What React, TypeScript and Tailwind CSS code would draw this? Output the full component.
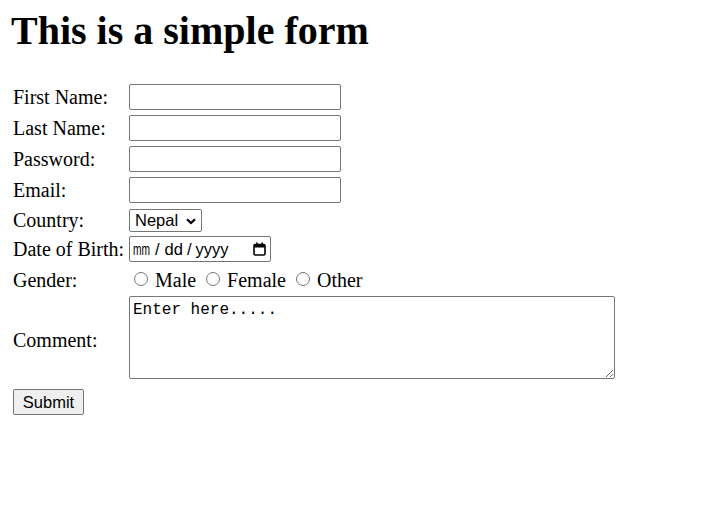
import React from 'react';

const serif = { fontFamily: '"Liberation Serif", "Times New Roman", serif' };
const sans = { fontFamily: '"Liberation Sans", Arial, sans-serif' };

function Row({
    label,
    children,
    className = '',
    labelClassName = '',
}: {
    label: string;
    children: React.ReactNode;
    className?: string;
    labelClassName?: string;
}) {
    return (
        <div className={`flex items-center ${className}`}>
            <div className={`w-[116px] shrink-0 text-[20px] leading-[23px] ${labelClassName}`}>{label}</div>
            <div className="flex items-center">{children}</div>
        </div>
    );
}

function TextBox({ type = 'text' }: { type?: string }) {
    return (
        <input
            type={type}
            className="w-[212px] h-[26px] border border-[#767676] rounded-[2px] bg-white px-1 outline-none"
        />
    );
}

function Radio({ label }: { label: string }) {
    return (
        <label className="flex items-center mr-[5px]">
            <span className="ml-[5px] mr-[7px] mt-[-3px] shrink-0 w-[14px] h-[14px] rounded-full border border-[#767676] bg-white" />
            <span className="text-[20px] leading-[23px]">{label}</span>
        </label>
    );
}

export default function App() {
    return (
        <div className="min-h-screen bg-white text-black px-[13px] pt-[8px]" style={serif}>
            <h1 className="text-[40px] leading-[46px] font-bold mb-[30px] -ml-[2px]">This is a simple form</h1>

            <form className="flex flex-col gap-[5px]" onSubmit={(e) => e.preventDefault()}>
                <Row label="First Name:"><TextBox /></Row>
                <Row label="Last Name:"><TextBox /></Row>
                <Row label="Password:"><TextBox type="password" /></Row>
                <Row label="Email:"><TextBox type="email" /></Row>

                {/* Country */}
                <Row label="Country:" className="mt-[1px]">
                    <div
                        className="w-[73px] h-[23px] border border-[#767676] rounded-[2px] bg-white flex items-center pl-[5px] pr-[4px] justify-between text-[16.5px]"
                        style={sans}
                    >
                        <span>Nepal</span>
                        <svg width="12" height="12" viewBox="0 0 12 12" className="mt-[1px]">
                            <path d="M2 4.2 L6 8 L10 4.2" fill="none" stroke="#000" strokeWidth="2.2" />
                        </svg>
                    </div>
                </Row>

                {/* Date of Birth */}
                <Row label="Date of Birth:" className="-mt-[1px]">
                    <div
                        className="w-[142px] h-[26px] border border-[#767676] rounded-[2px] bg-white flex items-center pl-[3px] pr-[4px] justify-between text-[16.5px]"
                        style={sans}
                    >
                        <span className="flex items-center">
                            <span className="inline-block w-[17px] overflow-visible">
                                <span className="inline-block scale-x-[0.62] origin-left">mm</span>
                            </span>
                            <span className="px-[5px]">/</span>
                            <span>dd</span>
                            <span className="px-[4px]">/</span>
                            <span>yyyy</span>
                        </span>
                        <svg width="13" height="14" viewBox="0 0 13 14">
                            <rect x="1" y="2.5" width="11" height="10.5" rx="1.2" fill="none" stroke="#000" strokeWidth="1.6" />
                            <rect x="1" y="2.5" width="11" height="3" fill="#000" />
                            <rect x="3" y="0.5" width="1.6" height="3" fill="#000" />
                            <rect x="8.4" y="0.5" width="1.6" height="3" fill="#000" />
                        </svg>
                    </div>
                </Row>

                {/* Gender */}
                <Row label="Gender:" className="mt-[2px]">
                    <div className="flex items-center">
                        <Radio label="Male" />
                        <Radio label="Female" />
                        <Radio label="Other" />
                    </div>
                </Row>

                {/* Comment */}
                <Row label="Comment:" className="-mt-[1px]" labelClassName="pt-[6px]">
                    <textarea
                        readOnly
                        defaultValue="Enter here....."
                        className="w-[486px] h-[83px] border border-[#767676] rounded-[2px] bg-white px-[3px] pt-[3px] text-[16px] leading-[20px] resize outline-none"
                        style={{ fontFamily: '"Liberation Mono", Consolas, monospace' }}
                    />
                </Row>

                <div className="mt-[5px]">
                    <button
                        type="submit"
                        className="w-[71px] h-[26px] bg-[#efefef] border border-[#767676] rounded-[2px] text-[16.5px] leading-none"
                        style={sans}
                    >
                        Submit
                    </button>
                </div>
            </form>
        </div>
    );
}
